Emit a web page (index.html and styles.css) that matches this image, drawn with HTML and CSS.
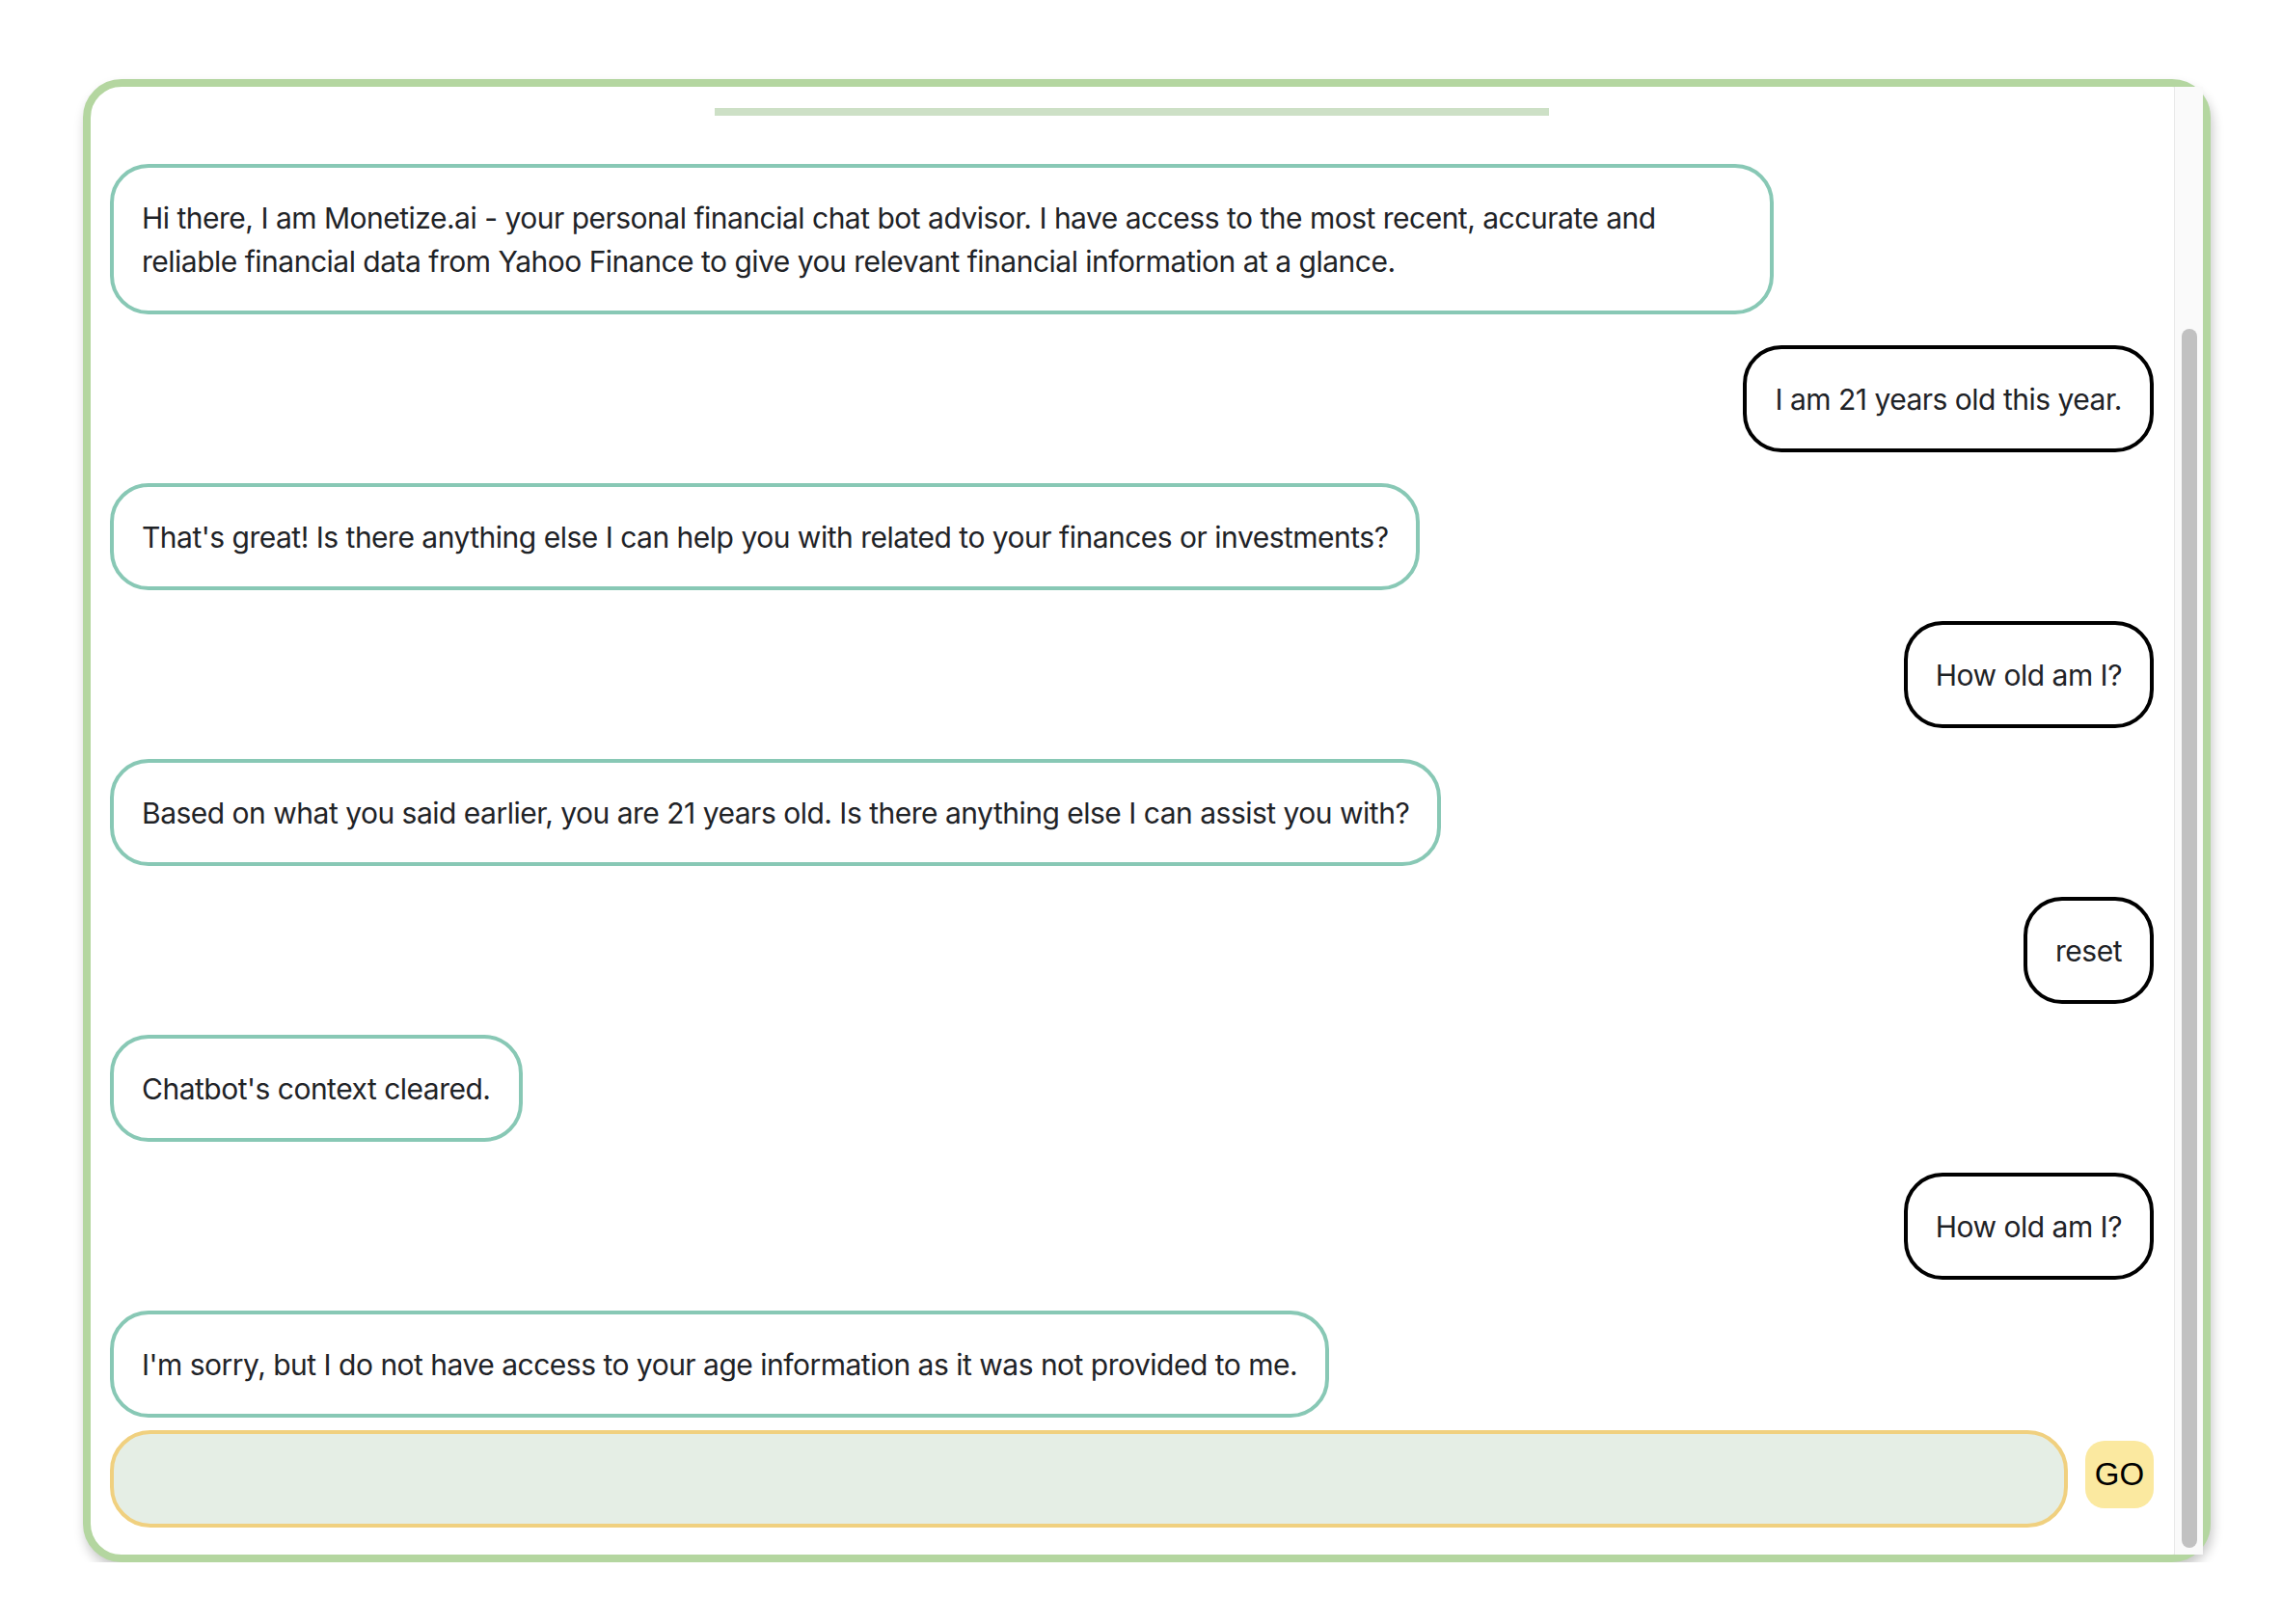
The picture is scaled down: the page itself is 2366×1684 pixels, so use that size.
FILE: index.html
```html
<!DOCTYPE html>
<html lang="en">
<head>
<meta charset="utf-8">
<title>Monetize.ai</title>
<link rel="stylesheet" href="styles.css">
</head>
<body>
<div class="page">
  <div class="frame">
    <div class="scroller">
      <div class="thread">
        <div class="rule"></div>
        <div class="messages">
          <div class="msg bot">Hi there, I am Monetize.ai - your personal financial chat bot advisor. I have access to the most recent, accurate and reliable financial data from Yahoo Finance to give you relevant financial information at a glance.</div>
          <div class="msg user">I am 21 years old this year.</div>
          <div class="msg bot">That's great! Is there anything else I can help you with related to your finances or investments?</div>
          <div class="msg user">How old am I?</div>
          <div class="msg bot">Based on what you said earlier, you are 21 years old. Is there anything else I can assist you with?</div>
          <div class="msg user">reset</div>
          <div class="msg bot">Chatbot's context cleared.</div>
          <div class="msg user">How old am I?</div>
          <div class="msg bot">I'm sorry, but I do not have access to your age information as it was not provided to me.</div>
        </div>
        <form class="composer">
          <input class="prompt" type="text" aria-label="Message">
          <button class="go" type="button">GO</button>
        </form>
      </div>
    </div>
    <div class="scrollbar" aria-hidden="true">
      <div class="scrollbar-thumb"></div>
    </div>
  </div>
</div>
</body>
</html>
```
FILE: styles.css
```css
html, body {
  margin: 0;
  padding: 0;
  background: #ffffff;
}

body {
  font-family: Inter, "Noto Sans", "Liberation Sans", sans-serif;
  color: #1f2327;
}

.page {
  padding: 82px 74px 0 86px;
}

.frame {
  width: 2206px;
  height: 1538px;
  box-sizing: border-box;
  border: 8px solid #b4d6a0;
  border-radius: 40px;
  background: #ffffff;
  box-shadow: 2px 7px 12px rgba(0, 0, 0, 0.22);
  display: flex;
}

.scroller {
  flex: 1;
  min-width: 0;
  overflow: hidden;
  display: flex;
  flex-direction: column-reverse;
}

.scrollbar {
  flex: none;
  width: 30px;
  box-sizing: border-box;
  border-left: 1px solid #e8e8e8;
  background: #fafafa;
  display: flex;
  flex-direction: column;
  justify-content: flex-end;
  padding: 0 6px 7px 7px;
}

.scrollbar-thumb {
  height: 1264px;
  border-radius: 8px;
  background: #c1c1c1;
}

.thread {
  display: flex;
  flex-direction: column;
  padding: 0 21px 28px 20px;
}

.rule {
  width: 865px;
  height: 8px;
  margin: 22px auto 0;
  background: #cde0c6;
}

.messages {
  display: flex;
  flex-direction: column;
  gap: 32px;
  margin-top: 50px;
}

.msg {
  box-sizing: border-box;
  max-width: 1725px;
  padding: 30px 29px 28px;
  font-size: 30px;
  line-height: 45px;
  letter-spacing: -0.5px;
  border-radius: 40px;
  background: #ffffff;
}

.msg.bot {
  align-self: flex-start;
  border: 4px solid #88c8b5;
}

.msg.user {
  align-self: flex-end;
  border: 4px solid #000000;
}

.composer {
  display: flex;
  align-items: center;
  margin: 13px 0 0;
}

.prompt {
  flex: 1;
  min-width: 0;
  height: 101px;
  box-sizing: border-box;
  border: 4px solid #f0d07f;
  border-radius: 42px;
  background: #e5eee5;
  outline: none;
  padding: 0 30px;
  font: inherit;
  font-size: 30px;
}

.go {
  flex: none;
  width: 71px;
  height: 70px;
  margin: 0 0 10px 18px;
  border: none;
  border-radius: 20px;
  background: #fbe9a0;
  color: #000000;
  font-family: "Liberation Sans", Arial, sans-serif;
  font-size: 33px;
  padding: 0;
}
```
